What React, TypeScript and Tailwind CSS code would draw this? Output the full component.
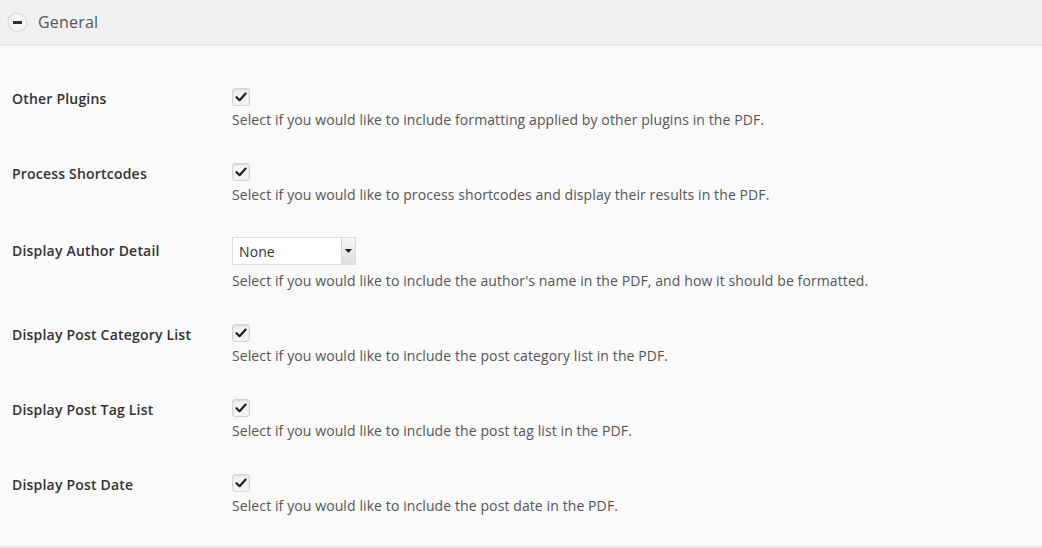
import React from "react";

type Row = { label: string; desc: string; kind: "check" | "select" };

const rows: Row[] = [
  { label: "Other Plugins", desc: "Select if you would like to include formatting applied by other plugins in the PDF.", kind: "check" },
  { label: "Process Shortcodes", desc: "Select if you would like to process shortcodes and display their results in the PDF.", kind: "check" },
  { label: "Display Author Detail", desc: "Select if you would like to include the author's name in the PDF, and how it should be formatted.", kind: "select" },
  { label: "Display Post Category List", desc: "Select if you would like to include the post category list in the PDF.", kind: "check" },
  { label: "Display Post Tag List", desc: "Select if you would like to include the post tag list in the PDF.", kind: "check" },
  { label: "Display Post Date", desc: "Select if you would like to include the post date in the PDF.", kind: "check" },
];

const CheckBox = () => (
  <div className="w-[18px] h-[18px] rounded-[3px] border border-[#d4d4d4] bg-[#f3f3f3] shadow-[inset_0_1px_2px_rgba(0,0,0,0.12)] flex items-center justify-center">
    <svg width="12" height="10" viewBox="0 0 12 10">
      <path d="M1.5 5.2 L4.6 8.2 L10.6 1.6" fill="none" stroke="#1e1e1e" strokeWidth="2.2" strokeLinecap="round" strokeLinejoin="round" />
    </svg>
  </div>
);

const Select = () => (
  <div className="w-[124px] h-[28px] border border-[#dcdcdc] bg-white flex items-stretch mt-[-1px]">
    <div className="flex-1 pl-[6px] flex items-center text-[14px] text-[#333] tracking-[0.1px]">None</div>
    <div className="w-[14px] border-l border-[#d6d6d6] bg-gradient-to-b from-[#f6f6f6] to-[#dedede] flex items-center justify-center">
      <svg width="7" height="4" viewBox="0 0 7 4">
        <path d="M0 0 H7 L3.5 4 Z" fill="#222" />
      </svg>
    </div>
  </div>
);

export default function App() {
  return (
    <div className="w-[1042px] h-[548px] bg-[#fafafa] overflow-hidden" style={{ fontFamily: '"Open Sans", sans-serif' }}>
      <div className="h-[46px] bg-[#f1f1f1] border-b-2 border-[#e8e8e8] flex items-center pl-[8px] gap-[11px]">
        <div className="w-[19px] h-[19px] rounded-full bg-[#f6f6f6] border border-[#dedede] shadow-[0_0_2px_rgba(0,0,0,0.12)] flex items-center justify-center">
          <div className="w-[9px] h-[3px] bg-[#333]" />
        </div>
        <div className="text-[16px] text-[#555] tracking-[0.2px] pb-[1px]">General</div>
      </div>
      <div className="pt-[26px] pb-[13px] border-b-2 border-[#e6e6e6]">
        {rows.map((r) => (
          <div key={r.label} className="flex pt-[16px] pb-[17px]">
            <div className={`w-[232px] pl-[12px] text-[14px] font-semibold text-[#333] tracking-[0.2px] leading-[20px] ${r.kind === "check" ? "pt-[1px]" : "pt-[3px]"}`}>{r.label}</div>
            <div className="flex flex-col">
              {r.kind === "check" ? <CheckBox /> : <Select />}
              <div className={`text-[14px] text-[#555] tracking-[0.1px] leading-[20px] ${r.kind === "check" ? "mt-[4px]" : "mt-[6px]"}`}>{r.desc}</div>
            </div>
          </div>
        ))}
      </div>
    </div>
  );
}
